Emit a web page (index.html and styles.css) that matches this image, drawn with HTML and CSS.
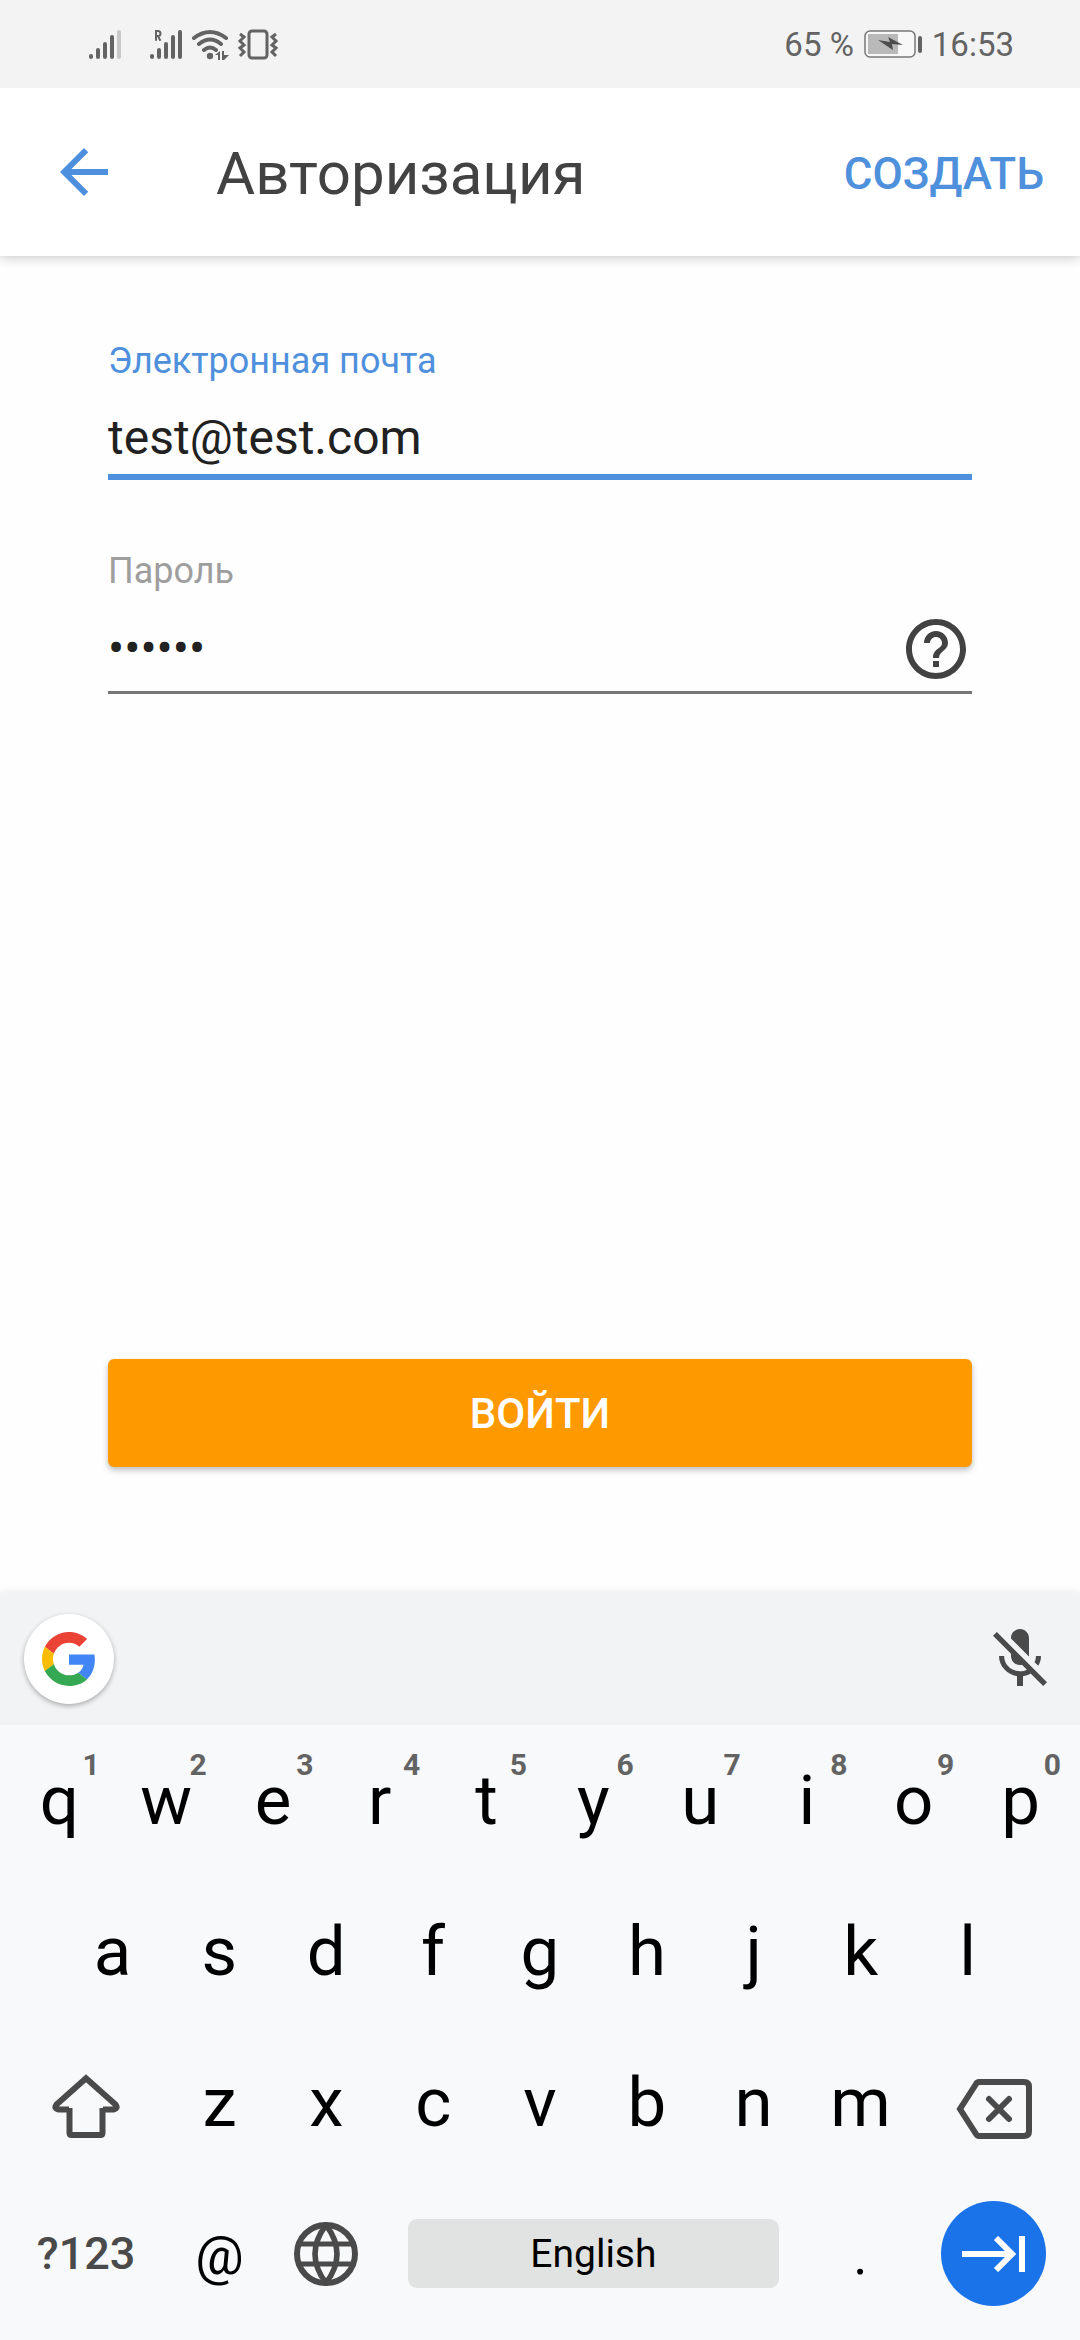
FILE: index.html
```html
<!DOCTYPE html>
<html lang="ru">
<head>
<meta charset="utf-8">
<meta name="viewport" content="width=device-width, initial-scale=1">
<title>Авторизация</title>
<link rel="stylesheet" href="styles.css">
</head>
<body>
<div class="screen">
  <div class="status">
    <div class="status-group status-icons">
      <svg width="34" height="34" viewBox="0 0 34 34" fill="none" stroke="#636363" stroke-width="4" stroke-linecap="round"><path d="M3 29v1M10 23v7M17 17v13M24 10v20"/><path d="M31 5v25" stroke="#c8c8c8"/></svg>
      <svg class="roaming" width="34" height="34" viewBox="0 0 34 34" fill="none" stroke="#636363" stroke-width="4" stroke-linecap="round"><path d="M3 29v1M10 23v7M17 17v13M24 10v20M31 5v25"/><path d="M7 13V4h2a2 2 0 0 1 0 5H7m2 0 2 4" stroke-width="2"/></svg>
      <svg width="38" height="34" viewBox="0 0 38 34" fill="none" stroke="#636363" stroke-width="4" stroke-linecap="round"><path d="M3 11Q19-1 35 11M8 17q11-9 22 0M13 23q6-5 12 0"/><circle cx="19" cy="29" r="3.200" fill="#636363" stroke="none"/><path d="M24 28l5-4v9h-2v-5zM31 24l2 0v4h5l-5 5h-2z" fill="#636363" stroke="none"/></svg>
      <svg width="42" height="34" viewBox="0 0 42 34" fill="none" stroke="#636363" stroke-width="3"><rect x="12" y="4" width="18" height="27" rx="3"/><path d="M3 7l4 3-4 4 4 4-4 3 4 4-4 4M39 7l-4 3 4 4-4 4 4 3-4 4 4 4"/></svg>
    </div>
    <div class="status-group">
      <span>65 %</span>
      <svg width="58" height="28" viewBox="0 0 58 28"><rect x="1" y="1" width="50" height="26" rx="5" fill="#f8f8f8" stroke="#777" stroke-width="1.500"/><path d="M4 4h30v20H4z" fill="#b9b9b9"/><path d="M14 10l12 2-2-5 15 8-11-1 1 6z" fill="#4c4c4c"/><rect x="54" y="6" width="4" height="17" rx="2" fill="#636363"/></svg>
      <span>16:53</span>
    </div>
  </div>

  <header class="appbar">
    <button class="icon-button" type="button" aria-label="Назад"><svg width="72" height="72" viewBox="0 0 24 24" fill="#4f90dc"><path d="M20 11H7.830l5.590-5.590L12 4l-8 8 8 8 1.410-1.410L7.830 13H20v-2z"/></svg></button>
    <h1 class="title">Авторизация</h1>
    <button class="create" type="button">СОЗДАТЬ</button>
  </header>

  <form class="form">
    <div class="field field-active">
      <label for="email">Электронная почта</label>
      <div class="control"><input id="email" type="text" value="test@test.com" spellcheck="false"></div>
    </div>
    <div class="field">
      <label for="password">Пароль</label>
      <div class="control">
        <input id="password" type="password" value="secret">
        <button class="icon-button" type="button" aria-label="Забыли пароль?"><svg width="72" height="72" viewBox="0 0 24 24" fill="#424242"><path d="M11 18h2v-2h-2v2zm1-16C6.480 2 2 6.480 2 12s4.480 10 10 10 10-4.480 10-10S17.520 2 12 2zm0 18c-4.410 0-8-3.590-8-8s3.590-8 8-8 8 3.590 8 8-3.590 8-8 8zm0-14c-2.210 0-4 1.790-4 4h2c0-1.100.9-2 2-2s2 .9 2 2c0 2-3 1.750-3 5h2c0-2.250 3-2.500 3-5 0-2.210-1.790-4-4-4z"/></svg></button>
      </div>
    </div>
    <button class="submit" type="button">ВОЙТИ</button>
  </form>

  <div class="keyboard">
    <div class="toolbar">
      <button class="google" type="button" aria-label="Google"><svg width="54" height="54" viewBox="0 0 48 48"><path fill="#EA4335" d="M24 9.500c3.540 0 6.710 1.220 9.210 3.600l6.850-6.850C35.900 2.380 30.470 0 24 0 14.620 0 6.510 5.380 2.560 13.220l7.980 6.190C12.430 13.720 17.740 9.500 24 9.500z"/><path fill="#4285F4" d="M46.980 24.550c0-1.570-.15-3.090-.38-4.550H24v9.020h12.940c-.58 2.960-2.260 5.480-4.780 7.180l7.730 6c4.510-4.180 7.090-10.360 7.090-17.650z"/><path fill="#FBBC05" d="M10.530 28.590c-.48-1.450-.76-2.990-.76-4.590s.27-3.140.76-4.590l-7.980-6.190C.92 16.460 0 20.120 0 24c0 3.880.92 7.540 2.560 10.780l7.970-6.190z"/><path fill="#34A853" d="M24 48c6.480 0 11.930-2.130 15.890-5.810l-7.730-6c-2.150 1.450-4.920 2.300-8.160 2.300-6.260 0-11.570-4.220-13.470-9.910l-7.980 6.190C6.510 42.620 14.620 48 24 48z"/></svg></button>
      <button class="icon-button" type="button" aria-label="Голосовой ввод выключен"><svg width="72" height="72" viewBox="0 0 24 24" fill="#4a4a4a"><path d="M19 11h-1.700c0 .74-.16 1.430-.43 2.050l1.230 1.230c.56-.98.9-2.090.9-3.280zm-4.020.17c0-.06.02-.11.02-.17V5c0-1.660-1.340-3-3-3S9 3.340 9 5v.18l5.980 5.990zM4.270 3L3 4.270l6.010 6.010V11c0 1.660 1.330 3 2.990 3 .22 0 .44-.03.65-.08l1.660 1.660c-.71.33-1.500.52-2.310.52-2.760 0-5.300-2.100-5.300-5.100H5c0 3.410 2.720 6.230 6 6.720V21h2v-3.280c.91-.13 1.770-.45 2.540-.9L19.730 21 21 19.730 4.270 3z"/></svg></button>
    </div>
    <div class="keys">
      <div class="row row-top">
        <button class="key" type="button">q<span class="hint">1</span></button>
        <button class="key" type="button">w<span class="hint">2</span></button>
        <button class="key" type="button">e<span class="hint">3</span></button>
        <button class="key" type="button">r<span class="hint">4</span></button>
        <button class="key" type="button">t<span class="hint">5</span></button>
        <button class="key" type="button">y<span class="hint">6</span></button>
        <button class="key" type="button">u<span class="hint">7</span></button>
        <button class="key" type="button">i<span class="hint">8</span></button>
        <button class="key" type="button">o<span class="hint">9</span></button>
        <button class="key" type="button">p<span class="hint">0</span></button>
      </div>
      <div class="row row-home">
        <button class="key" type="button">a</button>
        <button class="key" type="button">s</button>
        <button class="key" type="button">d</button>
        <button class="key" type="button">f</button>
        <button class="key" type="button">g</button>
        <button class="key" type="button">h</button>
        <button class="key" type="button">j</button>
        <button class="key" type="button">k</button>
        <button class="key" type="button">l</button>
      </div>
      <div class="row row-wide">
        <button class="key" type="button" aria-label="Shift"><svg width="68" height="72" viewBox="0 -7 68 72" fill="none" stroke="#4a4a4a" stroke-width="6"><path d="M17 35.500H6.500q-5-1-2-5L34 4.200l29.500 26.300q3 4-2 5H51" /><path d="M17.500 34v25q0 2 2 2h29q2 0 2-2V34"/></svg></button>
        <button class="key" type="button">z</button>
        <button class="key" type="button">x</button>
        <button class="key" type="button">c</button>
        <button class="key" type="button">v</button>
        <button class="key" type="button">b</button>
        <button class="key" type="button">n</button>
        <button class="key" type="button">m</button>
        <button class="key" type="button" aria-label="Backspace"><svg width="76" height="72" viewBox="0 -12 76 72" fill="none" stroke="#4a4a4a" stroke-width="6"><path d="M23 3h45q5 0 5 5v44q0 5-5 5H23q-2 0-3-2L4 30 20 5q1-2 3-2z"/><path d="M33 20l20 20M53 20L33 40" stroke-linecap="round"/></svg></button>
      </div>
      <div class="row row-wide row-bottom">
        <button class="key key-symbols" type="button">?123</button>
        <button class="key key-mark" type="button">@</button>
        <button class="key" type="button" aria-label="Язык"><svg width="64" height="64" viewBox="0 0 64 64" fill="none" stroke="#4a4a4a" stroke-width="6"><circle cx="32" cy="32" r="29"/><path d="M32 3Q10 32 32 61Q54 32 32 3z" stroke-width="5.500"/><path d="M5 22h54M5 42h54" stroke-width="5"/></svg></button>
        <button class="key key-space" type="button">English</button>
        <button class="key key-mark" type="button">.</button>
        <button class="key" type="button" aria-label="Далее"><span class="next"><svg width="64" height="36" viewBox="0 0 64 36" fill="none" stroke="#fff" stroke-width="6"><path d="M0 18h51M34 2l16 16-16 16M60 0v36"/></svg></span></button>
      </div>
    </div>
  </div>
</div>
</body>
</html>
```
FILE: styles.css
```css
* { box-sizing: border-box; }

body {
  margin: 0;
  background: #fefefe;
  font-family: Roboto, "Noto Sans", sans-serif;
  color: #212121;
}

button {
  margin: 0;
  padding: 0;
  border: 0;
  background: none;
  color: inherit;
  font: inherit;
}

svg { display: block; flex: none; }

.screen {
  display: flex;
  flex-direction: column;
  min-height: 100vh;
}

.status {
  position: relative;
  z-index: 1;
  display: flex;
  align-items: center;
  justify-content: space-between;
  height: 88px;
  padding: 0 66px 0 88px;
  background: #f3f3f3;
  color: #636363;
  font-size: 33px;
}

.status-group { display: flex; align-items: center; gap: 10px; }
.status-icons { gap: 8px; }
.roaming { margin-left: 19px; }

.appbar {
  display: flex;
  align-items: center;
  height: 168px;
  padding: 0 36px 0 48px;
  background: #fff;
  box-shadow: 0 1px 12px rgba(0, 0, 0, 0.24);
}

.icon-button { display: flex; flex: none; }

.title {
  flex: 1;
  margin: 0 0 0 96px;
  padding-top: 4px;
  color: #424242;
  font-size: 60px;
  font-weight: 400;
  line-height: 72px;
}

.create {
  padding-top: 4px;
  color: #4f90dc;
  font-size: 44px;
  font-weight: 500;
  line-height: 54px;
}

.form {
  display: flex;
  flex: 1;
  flex-direction: column;
  padding: 84px 108px 126px;
}

.field {
  display: flex;
  flex-direction: column;
  margin-bottom: 70px;
  color: #9e9e9e;
}

.field label { font-size: 36px; line-height: 42px; }
.field-active { color: #4f90dc; }

.control {
  display: flex;
  align-items: flex-end;
  height: 102px;
  padding-bottom: 6px;
  border-bottom: 3px solid #757575;
}

.field-active .control {
  height: 98px;
  padding-bottom: 0;
  border-bottom: 6px solid #4f90dc;
}

.control input {
  flex: 1;
  min-width: 0;
  height: 74px;
  padding: 0;
  border: 0;
  outline: 0;
  background: none;
  color: #212121;
  font: inherit;
  font-size: 48px;
}

.submit {
  height: 108px;
  margin-top: auto;
  border-radius: 6px;
  background: #ff9900;
  box-shadow: 0 3px 6px rgba(0, 0, 0, 0.26);
  color: #fff;
  font-size: 42px;
  font-weight: 500;
}

.keyboard {
  background: #f8f9fb;
  box-shadow: 0 0 9px rgba(0, 0, 0, 0.1);
}

.toolbar {
  display: flex;
  align-items: center;
  justify-content: space-between;
  height: 132px;
  padding: 0 24px;
  background: #f1f3f4;
}

.google {
  display: flex;
  align-items: center;
  justify-content: center;
  width: 90px;
  height: 90px;
  border-radius: 50%;
  background: #fff;
  box-shadow: 0 2px 5px rgba(0, 0, 0, 0.3);
}

.keys { padding-bottom: 11px; }

.row {
  display: grid;
  grid-template-columns: repeat(10, 1fr);
  height: 151px;
  padding: 0 6px;
}

.row-home { grid-template-columns: repeat(9, 1fr); padding: 0 59px; }
.row-wide { grid-template-columns: 3fr repeat(7, 2fr) 3fr; }
.row-bottom { grid-template-columns: 3fr 2fr 2fr 8fr 2fr 3fr; }

.key {
  position: relative;
  display: flex;
  align-items: center;
  justify-content: center;
  color: #000;
  font-size: 69px;
}

.hint {
  position: absolute;
  top: 22px;
  right: 13px;
  color: #636363;
  font-size: 30px;
  font-weight: 700;
  line-height: 36px;
}

.key-symbols { color: #4a4a4a; font-size: 45px; font-weight: 500; }
.key-mark { padding-top: 4px; font-size: 54px; }

.key-space {
  align-self: center;
  height: 69px;
  margin: 0 28px;
  border-radius: 9px;
  background: #e0e3e2;
  font-size: 39px;
}

.next {
  display: flex;
  align-items: center;
  justify-content: center;
  width: 105px;
  height: 105px;
  border-radius: 50%;
  background: #1a73e8;
}
```
